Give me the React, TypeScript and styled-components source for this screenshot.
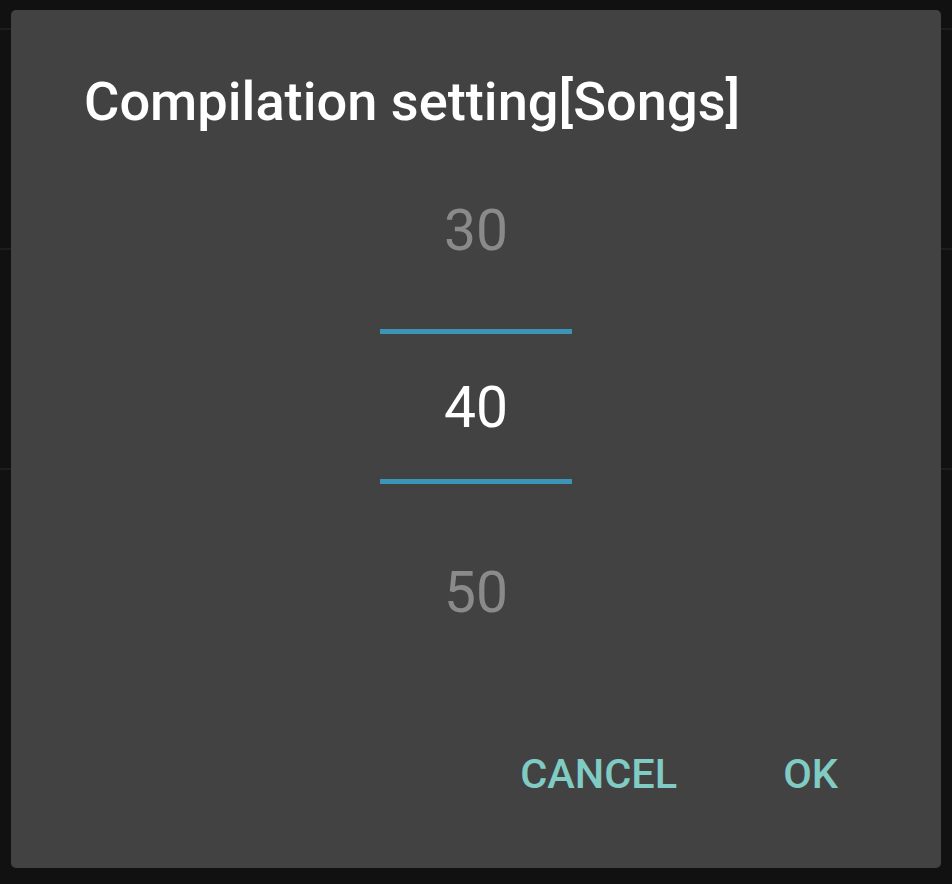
import React from "react";
import styled, { createGlobalStyle } from "styled-components";

const GlobalStyle = createGlobalStyle`
  html, body {
    margin: 0;
    padding: 0;
    background: #111111;
    font-family: Roboto, "Noto Sans", sans-serif;
  }
`;

const Page = styled.div`
  width: 952px;
  height: 884px;
  overflow: hidden;
  position: relative;
  background: #111111;
`;

const BackList = styled.div`
  display: flex;
  flex-direction: column;
`;

const BackRow = styled.div<{ $h: number }>`
  height: ${(p) => p.$h}px;
  border-bottom: 2px solid #1d1d1d;
  box-sizing: border-box;
`;

const Dialog = styled.div`
  position: absolute;
  left: 11px;
  top: 10px;
  width: 930px;
  height: 858px;
  box-sizing: border-box;
  background: #424242;
  border-radius: 5px;
  padding: 65px 76px 0 73px;
  display: flex;
  flex-direction: column;
`;

const Title = styled.h1`
  margin: 0;
  font-family: Roboto, sans-serif;
  font-weight: 500;
  font-size: 54.2px;
  line-height: 54px;
  color: #ffffff;
  white-space: nowrap;
`;

const Picker = styled.div`
  align-self: center;
  margin-top: 11px;
  width: 192px;
  margin-left: 3px;
  display: flex;
  flex-direction: column;
`;

const Item = styled.div<{ $selected?: boolean }>`
  height: ${(p) => (p.$selected ? "143px" : "180px")};
  display: flex;
  align-items: center;
  justify-content: center;
  font-family: Roboto, sans-serif;
  font-weight: 400;
  font-size: 57px;
  color: ${(p) => (p.$selected ? "#ffffff" : "#8a8a8a")};
  ${(p) =>
    p.$selected
      ? `
    margin: 9px 0 18px;
    border-top: 5px solid #3a95b7;
    border-bottom: 5px solid #3a95b7;
    padding-top: 2px;
  `
      : ""}
`;

const Actions = styled.div`
  margin-top: 73px;
  display: flex;
  justify-content: flex-end;
  gap: 52px;
`;

const ActionButton = styled.button`
  background: none;
  border: none;
  padding: 0 27px;
  margin: 0;
  font-family: Roboto, sans-serif;
  font-weight: 500;
  font-size: 41.5px;
  line-height: 37px;
  letter-spacing: 0;
  text-transform: uppercase;
  color: #80cbc4;
  cursor: pointer;
`;

export default function App() {
  return (
    <Page>
      <GlobalStyle />
      <BackList>
        <BackRow $h={30} />
        <BackRow $h={220} />
        <BackRow $h={220} />
      </BackList>
      <Dialog>
        <Title>Compilation setting[Songs]</Title>
        <Picker>
          <Item>30</Item>
          <Item $selected>40</Item>
          <Item>50</Item>
        </Picker>
        <Actions>
          <ActionButton>Cancel</ActionButton>
          <ActionButton>OK</ActionButton>
        </Actions>
      </Dialog>
    </Page>
  );
}
